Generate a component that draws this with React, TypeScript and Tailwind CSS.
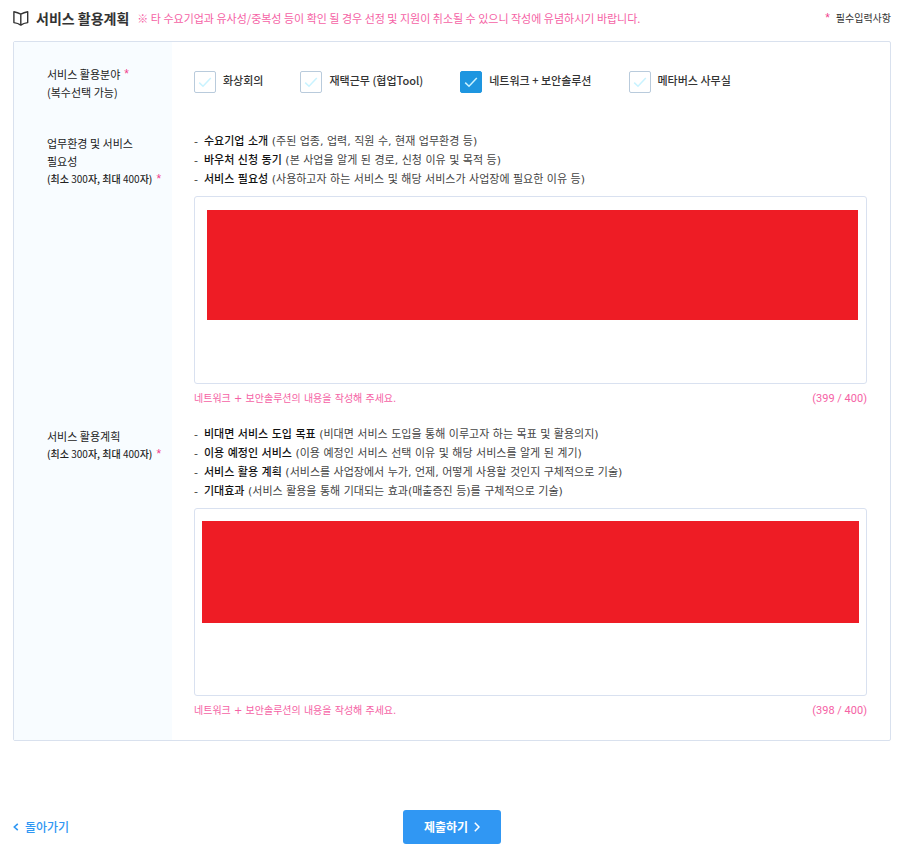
import React, { useState } from 'react';

interface Guide {
    title: string;
    detail: string;
}

interface PlanFieldProps {
    id: string;
    label: React.ReactNode;
    guides: Guide[];
    count: number;
    mask: string;
    className?: string;
}

const FIELDS = ['화상회의', '재택근무 (협업Tool)', '네트워크 + 보안솔루션', '메타버스 사무실'];

const ENVIRONMENT_GUIDES: Guide[] = [
    { title: '수요기업 소개', detail: '(주된 업종, 업력, 직원 수, 현재 업무환경 등)' },
    { title: '바우처 신청 동기', detail: '(본 사업을 알게 된 경로, 신청 이유 및 목적 등)' },
    { title: '서비스 필요성', detail: '(사용하고자 하는 서비스 및 해당 서비스가 사업장에 필요한 이유 등)' }
];

const PLAN_GUIDES: Guide[] = [
    { title: '비대면 서비스 도입 목표', detail: '(비대면 서비스 도입을 통해 이루고자 하는 목표 및 활용의지)' },
    { title: '이용 예정인 서비스', detail: '(이용 예정인 서비스 선택 이유 및 해당 서비스를 알게 된 계기)' },
    { title: '서비스 활용 계획', detail: '(서비스를 사업장에서 누가, 언제, 어떻게 사용할 것인지 구체적으로 기술)' },
    { title: '기대효과', detail: '(서비스 활용을 통해 기대되는 효과(매출증진 등)를 구체적으로 기술)' }
];

const Asterisk = () => (
    <span className="inline-block align-middle font-['Liberation_Sans',sans-serif] text-[12px] leading-none font-normal text-[#f0408c]">
        *
    </span>
);

const PlanField: React.FC<PlanFieldProps> = ({ id, label, guides, count, mask, className = '' }) => (
    <div className="grid grid-cols-[158px_minmax(0,1fr)]">
        <label htmlFor={id} className="block bg-[#f8fcff] pt-[11px] pl-[33px] text-[11px] leading-[18px] text-[#222]">
            {label}
            <span className="flex items-center gap-1 text-[10px] font-medium whitespace-nowrap">
                <span>
                    (최소 <span className="font-normal">300</span>자, 최대 <span className="font-normal">400</span>자)
                </span>
                <Asterisk />
            </span>
        </label>
        <div className={`pt-[9px] pr-[23px] pl-[22px] ${className}`}>
            <ul className="font-['DejaVu_Sans','Noto_Sans_CJK_KR',sans-serif] text-[11px] leading-[19px] text-[#444]">
                {guides.map((guide) => (
                    <li key={guide.title} className="flex">
                        <span className="w-[10px] shrink-0">-</span>
                        <span>
                            <strong className="font-medium text-[#111]">{guide.title}</strong> {guide.detail}
                        </span>
                    </li>
                ))}
            </ul>
            <div className="relative mt-[7px]">
                <textarea
                    id={id}
                    className="block h-[188px] w-full resize-none rounded-[3px] border border-[#d9e1f0] bg-white p-3 text-[11px] outline-none"
                />
                <div className={`pointer-events-none absolute bg-[#ee1c25] ${mask}`} />
            </div>
            <div className="mt-[6px] flex justify-between leading-[18px] text-[#f562a5]">
                <p className="font-['DejaVu_Sans','Noto_Sans_CJK_KR',sans-serif] text-[10px]">
                    네트워크 + 보안솔루션의 내용을 작성해 주세요.
                </p>
                <p className="font-[Roboto,sans-serif] text-[11px]">({count} / 400)</p>
            </div>
        </div>
    </div>
);

export default function App() {
    const [selected, setSelected] = useState<string[]>(['네트워크 + 보안솔루션']);

    const toggle = (name: string) => {
        setSelected((prev) => (prev.includes(name) ? prev.filter((item) => item !== name) : [...prev, name]));
    };

    return (
        <form
            className="bg-white pt-2 pr-6 pb-3 pl-[13px] font-['Noto_Sans_CJK_KR',sans-serif]"
            onSubmit={(e) => e.preventDefault()}
        >
            {/* Section title */}
            <header className="flex h-[33px] items-start justify-between leading-5">
                <div className="flex items-center">
                    <svg
                        width="16"
                        height="16"
                        viewBox="0 0 16 16"
                        fill="none"
                        stroke="#333"
                        strokeWidth="1.4"
                        strokeLinejoin="round"
                    >
                        <path d="M7.8 4.2C6 3.2 3.2 2.2.9 1.8v10.8c2.3.3 5.1 1.2 6.9 2.5 1.8-1.3 4.6-2.2 6.9-2.5V1.8c-2.3.4-5.1 1.4-6.9 2.4zM7.8 4.2v10.9" />
                    </svg>
                    <h2 className="ml-[7px] text-[14px] font-bold text-[#333]">서비스 활용계획</h2>
                    <p className="ml-2 text-[11px] text-[#f562a5]">
                        ※ 타 수요기업과 유사성/중복성 등이 확인 될 경우 선정 및 지원이 취소될 수 있으니 작성에 유념하시기 바랍니다.
                    </p>
                </div>
                <p className="flex items-center gap-[6px] text-[10px] text-[#333]">
                    <Asterisk />
                    필수입력사항
                </p>
            </header>

            <section className="rounded-[2px] border border-[#d9e1ee]">
                <div role="group" aria-labelledby="fields" className="grid grid-cols-[158px_minmax(0,1fr)]">
                    <div id="fields" className="bg-[#f8fcff] pt-[23px] pl-[33px] text-[11px] leading-[18px] text-[#222]">
                        <span className="flex items-center gap-1">
                            서비스 활용분야
                            <Asterisk />
                        </span>
                        (복수선택 가능)
                    </div>
                    <div className="flex flex-wrap gap-x-[37px] gap-y-2 pt-[29px] pb-[30px] pl-[22px]">
                        {FIELDS.map((name) => (
                            <label key={name} className="flex gap-[7px] text-[11px] leading-[18px] font-medium text-[#333]">
                                <span className="grid size-[22px] place-items-center">
                                    <input
                                        type="checkbox"
                                        checked={selected.includes(name)}
                                        onChange={() => toggle(name)}
                                        className="col-start-1 row-start-1 size-[22px] appearance-none rounded-[2px] border border-[#b9cbdc] bg-white checked:border-[#1e96e0] checked:bg-[#1e96e0]"
                                    />
                                    <svg
                                        width="14"
                                        height="12"
                                        viewBox="0 0 14 12"
                                        fill="none"
                                        stroke="#c9f3ff"
                                        strokeWidth="1.5"
                                        className="pointer-events-none col-start-1 row-start-1"
                                    >
                                        <path d="M1.2 6.6 5 10.3 12.8 2" />
                                    </svg>
                                </span>
                                {name}
                            </label>
                        ))}
                    </div>
                </div>

                <PlanField
                    id="environment"
                    label={
                        <>
                            업무환경 및 서비스
                            <br />
                            필요성
                        </>
                    }
                    guides={ENVIRONMENT_GUIDES}
                    count={399}
                    mask="top-[14px] right-[9px] left-[13px] h-[110px]"
                    className="pb-2"
                />
                <PlanField
                    id="plan"
                    label="서비스 활용계획"
                    guides={PLAN_GUIDES}
                    count={398}
                    mask="top-[13px] right-2 left-2 h-[102px]"
                    className="pb-5"
                />
            </section>

            {/* Bottom actions */}
            <footer className="mt-[69px] grid grid-cols-[1fr_auto_1fr] items-center text-[12px]">
                <a href="#back" className="flex items-center gap-[6px] font-medium text-[#3097f3]">
                    <svg width="6" height="8" viewBox="0 0 6 8" fill="none" stroke="currentColor" strokeWidth="1.6">
                        <path d="M4.8.8 1.3 4l3.5 3.2" />
                    </svg>
                    돌아가기
                </a>
                <button
                    type="submit"
                    className="flex h-[34px] w-[98px] items-center justify-center gap-[6px] rounded-[3px] bg-[#3097f3] font-bold text-white"
                >
                    제출하기
                    <svg width="6" height="10" viewBox="0 0 6 10" fill="none" stroke="currentColor" strokeWidth="1.5">
                        <path d="M.8.8 5 5 .8 9.2" />
                    </svg>
                </button>
            </footer>
        </form>
    );
}
